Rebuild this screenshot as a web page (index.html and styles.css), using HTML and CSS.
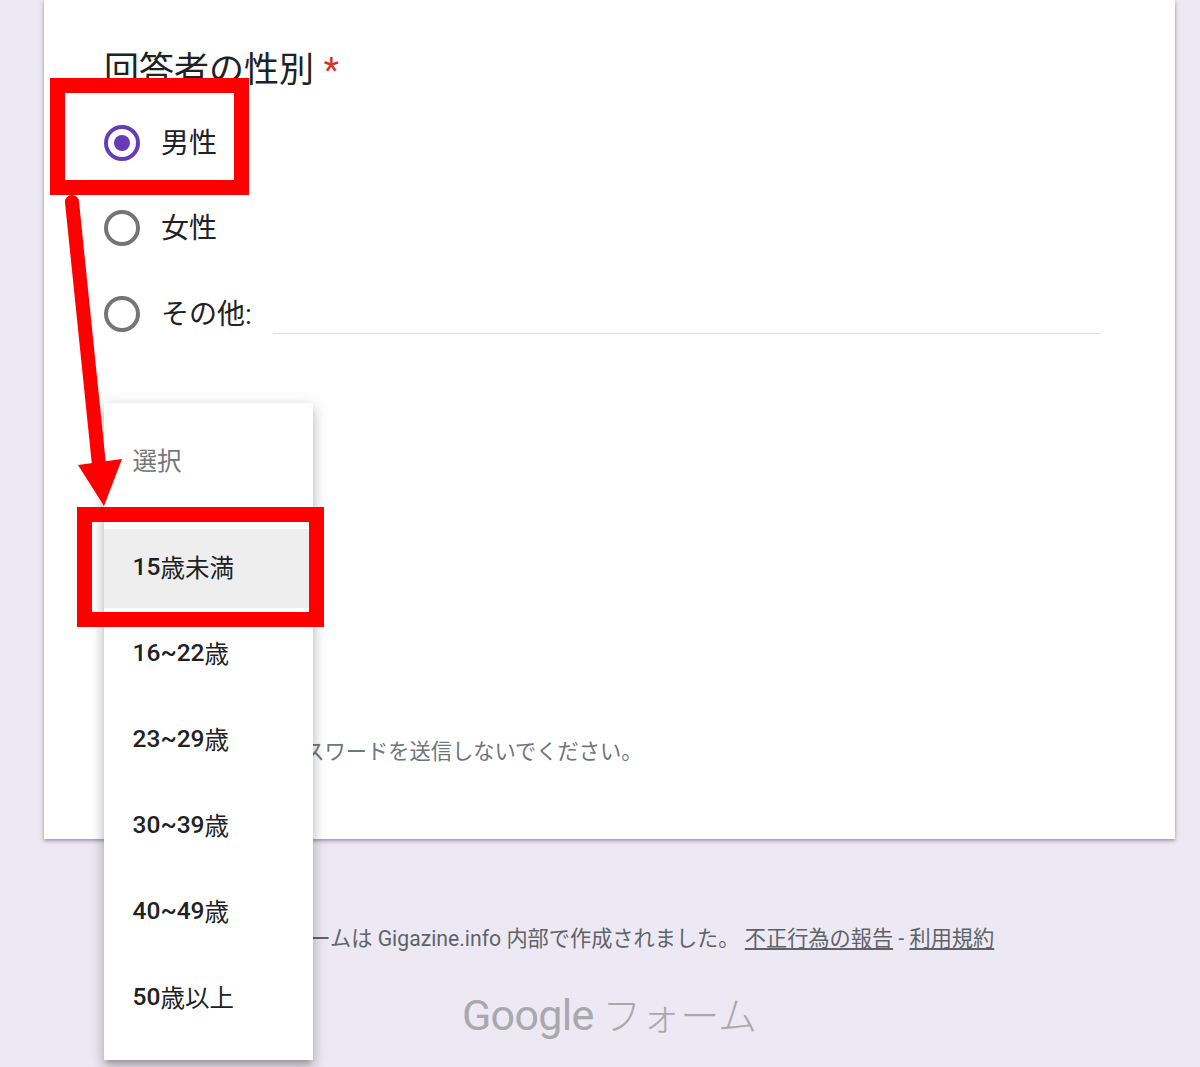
FILE: index.html
```html
<!DOCTYPE html>
<html lang="ja">
<head>
<meta charset="utf-8">
<title>Google フォーム</title>
<link rel="stylesheet" href="styles.css">
</head>
<body>
<div class="page">
  <main class="card">
    <h2 class="question">回答者の性別 <span class="req">*</span></h2>
    <div class="options">
      <label class="option"><span class="radio on"></span><span class="option-text">男性</span></label>
      <label class="option"><span class="radio"></span><span class="option-text">女性</span></label>
      <label class="option"><span class="radio"></span><span class="option-text">その他:</span><span class="other-line"></span></label>
    </div>
    <p class="note">Google フォームでパスワードを送信しないでください。</p>
  </main>
  <footer class="footer">
    <p class="legal">このフォームは Gigazine.info 内部で作成されました。 <a>不正行為の報告</a> - <a>利用規約</a></p>
    <p class="brand"><span class="brand-g">Google</span> <span class="brand-f">フォーム</span></p>
  </footer>
</div>

<ul class="menu">
  <li class="item placeholder">選択</li>
  <li class="item active">15<span class="cjk">歳未満</span></li>
  <li class="item">16~22<span class="cjk">歳</span></li>
  <li class="item">23~29<span class="cjk">歳</span></li>
  <li class="item">30~39<span class="cjk">歳</span></li>
  <li class="item">40~49<span class="cjk">歳</span></li>
  <li class="item">50<span class="cjk">歳以上</span></li>
</ul>

<div class="mark mark-a"></div>
<div class="mark mark-b"></div>
<svg class="arrow" width="80" height="320" viewBox="0 0 80 320">
  <line x1="12" y1="9" x2="39" y2="272" stroke="#ff0000" stroke-width="14" stroke-linecap="round"/>
  <polygon points="18,272 62,266 44,313" fill="#ff0000"/>
</svg>
</body>
</html>
```
FILE: styles.css
```css
* { box-sizing: border-box; }
html, body { margin: 0; height: 1067px; overflow: hidden; }
body {
  background: #ede9f4;
  color: #202124;
  font-family: Roboto, "Noto Sans CJK JP", sans-serif;
  position: relative;
}
.page { display: flex; flex-direction: column; }
.card {
  width: 1131px;
  height: 839px;
  margin-left: 44px;
  padding: 49px 75px 0 60px;
  background: #fff;
  box-shadow: 0 2px 3px rgba(60,40,90,.3), 0 1px 6px rgba(60,40,90,.2);
  display: flex;
  flex-direction: column;
}
.question {
  margin: 0;
  font-size: 35px;
  line-height: 44px;
  font-weight: 400;
}
.req { color: #d93025; margin-left: 1px; }
.options { display: flex; flex-direction: column; margin-top: 6px; }
.option {
  display: flex;
  align-items: center;
  gap: 21px;
  height: 85.5px;
  font-size: 28px;
}
.option-text { padding-bottom: 2px; }
.radio {
  width: 36px;
  height: 36px;
  flex: none;
  margin-top: 2px;
  border: 4px solid #757575;
  border-radius: 50%;
  display: flex;
  align-items: center;
  justify-content: center;
}
.radio.on { border-color: #673ab7; }
.radio.on::after {
  content: "";
  width: 16px;
  height: 16px;
  border-radius: 50%;
  background: #673ab7;
}
.other-line {
  flex: 1;
  align-self: flex-end;
  height: 1px;
  margin: 0 0 22px 0;
  background: #dadce0;
}
.note {
  margin: 0;
  margin-top: 381.5px;
  font-size: 21.25px;
  line-height: 30px;
  color: #70757a;
}
.footer {
  width: 1131px;
  margin-left: 44px;
  text-align: center;
}
.legal {
  margin: 85px 0 0;
  font-size: 21.2px;
  line-height: 30px;
  color: #5f6368;
}
.legal a { text-decoration: underline; }
.brand {
  margin: 34px 0 0;
  color: #a9a8ad;
  line-height: 54px;
  font-size: 43px;
  word-spacing: -2px;
}
.brand-g { font-family: Roboto, sans-serif; font-weight: 400; letter-spacing: -.7px; }
.brand-f { font-weight: 300; font-size: 39px; }

.menu {
  position: absolute;
  left: 104px;
  top: 403px;
  width: 209px;
  height: 657px;
  margin: 0;
  padding: 13px 0 0;
  list-style: none;
  background: #fff;
  box-shadow: 0 8px 10px 1px rgba(0,0,0,.14), 0 3px 14px 2px rgba(0,0,0,.12), 0 5px 5px -3px rgba(0,0,0,.2);
}
.item {
  height: 86px;
  padding-left: 28.6px;
  display: flex;
  align-items: center;
  font-size: 24.5px;
  font-weight: 500;
  color: #202124;
}
.cjk { font-weight: 400; }
.item.placeholder { font-weight: 400; color: #757575; margin-bottom: 21px; }
.item.active { background: linear-gradient(#eee, #eee) 0 6px / 100% 79px no-repeat; }

.mark { position: absolute; border: 15px solid #ff0000; }
.mark-a { left: 50px; top: 78px; width: 199px; height: 117px; }
.mark-b { left: 77px; top: 507px; width: 247px; height: 120px; }
.arrow { position: absolute; left: 60px; top: 193px; }
```
